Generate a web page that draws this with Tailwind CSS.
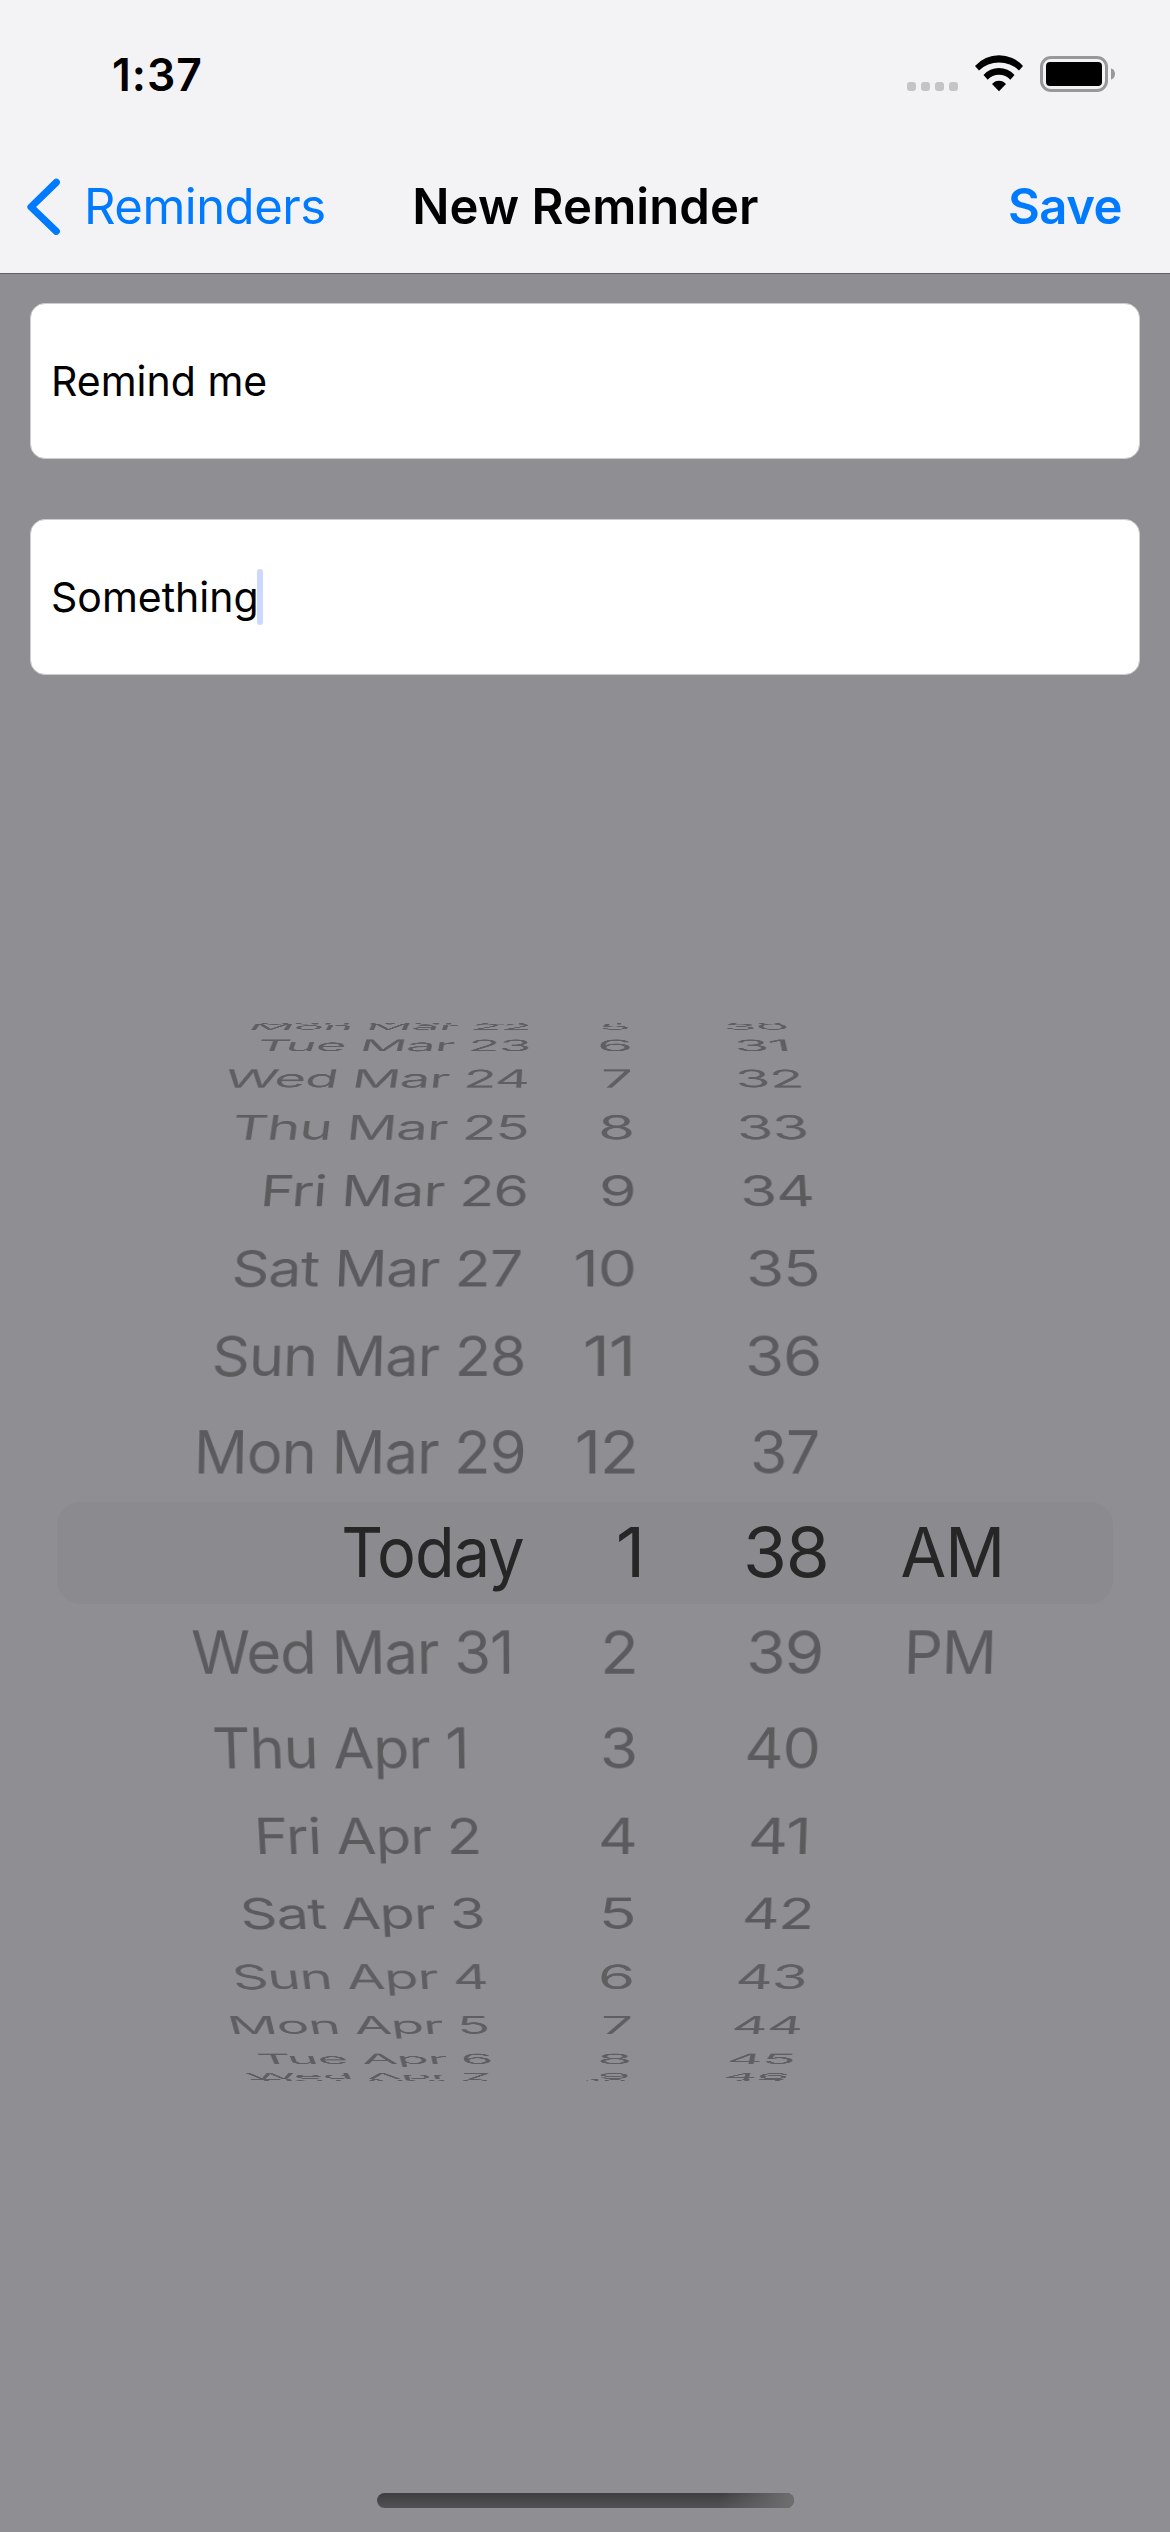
<!DOCTYPE html>
<html lang="en">
<head>
<meta charset="utf-8">
<title>New Reminder</title>
<script src="https://cdn.jsdelivr.net/npm/@tailwindcss/browser@4"></script>
</head>
<body class="w-[1170px] h-[2532px] overflow-hidden bg-[#8e8e93] flex flex-col font-['Inter','Roboto',sans-serif] text-black">
  <header class="h-[274px] shrink-0 bg-[#f3f3f6] border-b border-[#606064] flex flex-col">
    <div class="h-[147px] pt-[55px] pl-[112px] pr-[55px] flex justify-between items-start">
      <div class="text-[44.5px] leading-[40px] font-semibold tracking-[1px] whitespace-nowrap">1:37</div>
      <div class="flex items-start">
        <div class="flex gap-[5px] mt-[27px]">
          <i class="size-[9px] rounded-[3px] bg-[#c4c4c6]"></i>
          <i class="size-[9px] rounded-[3px] bg-[#c4c4c6]"></i>
          <i class="size-[9px] rounded-[3px] bg-[#c4c4c6]"></i>
          <i class="size-[9px] rounded-[3px] bg-[#c4c4c6]"></i>
        </div>
        <svg class="ml-[17px] w-[48px] h-[37px]" viewBox="0 0 48 37">
          <path d="M0 11A32 32 0 0 1 48 11L44 15.5A29 29 0 0 0 4 15.5Z"/>
          <path d="M8.5 20A20.7 20.7 0 0 1 39.5 20L35.3 24.7A15.3 15.3 0 0 0 12.7 24.7Z"/>
          <path d="M17 29A9 9 0 0 1 31 29L24 36.3Z"/>
        </svg>
        <svg class="ml-[17px] w-[75px] h-[38px]" viewBox="0 0 75 38">
          <rect x="1.5" y="2.5" width="65" height="33" rx="9.5" fill="none" stroke="#98989a" stroke-width="3"/>
          <rect x="6" y="7" width="56" height="24" rx="4"/>
          <path d="M71 13.2Q75 15 75 19T71 24.8Z" fill="#98989a"/>
        </svg>
      </div>
    </div>
    <nav class="h-[126px] grid grid-cols-[1fr_auto_1fr] pl-[27px] pr-[26px] text-[49px] leading-[60px] whitespace-nowrap">
      <a class="flex items-start text-[#007aff]">
        <svg class="w-[34px] h-[58px] mt-[31px]" viewBox="0 0 34 58" fill="none" stroke="#007aff" stroke-width="7.2" stroke-linecap="round" stroke-linejoin="round"><path d="M29.3 4.3L4 29L29.3 53.3"/></svg>
        <span class="ml-[23px] mt-[30px] tracking-[-0.5px]">Reminders</span>
      </a>
      <h1 class="mt-[30px] font-semibold tracking-[0.1px]">New Reminder</h1>
      <a class="mt-[30px] mr-[22px] text-right font-semibold text-[#007aff] tracking-[-0.5px]">Save</a>
    </nav>
  </header>

  <section class="pt-[29px] px-[30px] flex flex-col gap-[60px] text-[41px] leading-[50px] whitespace-nowrap">
    <div class="h-[156px] rounded-[15px] bg-white border border-[#cdcdcf] flex items-center pl-[20px]"><span>Remind me</span></div>
    <div class="h-[156px] rounded-[15px] bg-white border border-[#cdcdcf] flex items-center pl-[20px]"><span>Something</span><i class="-ml-[2px] w-[6px] h-[56px] rounded-[3px] bg-[#ced7fd]"></i></div>
  </section>

  <section class="mt-[348px] h-[1058px] relative overflow-hidden">
    <div class="absolute left-[57px] top-[479px] w-[1056px] h-[102px] rounded-[24px] bg-[#8a8a8f]"></div>
    <div id="wheel" class="relative flex flex-col"></div>
  </section>

  <div class="mt-[412px] ml-[377px] w-[417px] h-[15px] rounded-full bg-linear-to-b from-[#3e3e40] to-[#525254] overflow-hidden">
    <div class="ml-auto w-[75px] h-full bg-linear-to-r from-[#6c6c6e]/0 to-[#6f6f71]"></div>
  </div>

<script>
// Picker rows: cap top, baseline, side lean, then [text, left, right] per column.
const rows = [
  [1018.5, 1024.5, .013, ["Sun Mar 21", 262, 525], ["4", 601, 626], ["29", 727, 783]],
  [1024, 1030, .013, ["Mon Mar 22", 251, 529], ["5", 602, 628], ["30", 726, 787]],
  [1040, 1051.7, .014, ["Tue Mar 23", 261, 529], ["6", 600, 630], ["31", 737, 787]],
  [1070, 1088, .013, ["Wed Mar 24", 228.5, 527.5], ["7", 603, 631], ["32", 738, 800.5]],
  [1115.3, 1140, .011, ["Thu Mar 25", 236, 526.5], ["8", 601, 632], ["33", 739.5, 806]],
  [1175.7, 1206.7, .0085, ["Fri Mar 26", 264, 526], ["9", 602, 633.5], ["34", 743, 812]],
  [1249.7, 1286, .006, ["Sat Mar 27", 235, 521], ["10", 575.5, 634], ["35", 749, 817]],
  [1335.7, 1375.7, .004, ["Sun Mar 28", 215, 523.5], ["11", 585, 631], ["36", 748, 819]],
  [1430.3, 1473.3, .002, ["Mon Mar 29", 198.5, 523.5], ["12", 577, 635], ["37", 753, 818.5]],
  [1526.7, 1576.7, 0, ["Today", 344, 523], ["1", 619, 639], ["38", 747, 826], ["AM", 901.5, 1000]],
  [1630.7, 1673.7, -.003, ["Wed Mar 31", 192, 510], ["2", 604.5, 635], ["39", 749.5, 821], ["PM", 909, 991.7]],
  [1728, 1768.7, -.004, ["Thu Apr 1", 213.5, 465], ["3", 603, 635], ["40", 747.5, 818]],
  [1818.3, 1854.3, -.006, ["Fri Apr 2", 258, 478.5], ["4", 601, 635], ["41", 751, 807]],
  [1897.5, 1928.5, -.0085, ["Sat Apr 3", 243, 482.5], ["5", 603, 633], ["42", 745, 811]],
  [1964.3, 1989, -.011, ["Sun Apr 4", 235, 486], ["6", 601, 632], ["43", 738.5, 805]],
  [2016, 2033.7, -.013, ["Mon Apr 5", 230, 487], ["7", 603, 631], ["44", 734.5, 801]],
  [2053.3, 2063.7, -.014, ["Tue Apr 6", 257, 490.5], ["8", 600, 629.5], ["45", 730, 793]],
  [2073.7, 2079.5, -.013, ["Wed Apr 7", 245, 489.5], ["9", 600, 628], ["46", 726, 787]],
  [2079.5, 2084, -.013, ["Thu Apr 8", 250, 489], ["10", 586, 626], ["47", 726, 783]]
];
const AXIS = 600, WHEEL_TOP = 1023, WHEEL_BOTTOM = 2081, LINE = 72;
const columnX = [0, 540, 700, 880];
const wheel = document.getElementById("wheel");
const ctx = document.createElement("canvas").getContext("2d");
const mid = r => (r[0] + r[1]) / 2;

// Matrix taking the unit square to the quad p0 p1 p2 p3 (clockwise from top left).
function squareToQuad([x0, y0], [x1, y1], [x2, y2], [x3, y3]) {
  const dx1 = x1 - x2, dx2 = x3 - x2, sx = x0 - x1 + x2 - x3;
  const dy1 = y1 - y2, dy2 = y3 - y2, sy = y0 - y1 + y2 - y3;
  const d = dx1 * dy2 - dx2 * dy1;
  const g = (sx * dy2 - dx2 * sy) / d, h = (dx1 * sy - sx * dy1) / d;
  return [x1 - x0 + g * x1, y1 - y0 + g * y1, 0, g,
          x3 - x0 + h * x3, y3 - y0 + h * y3, 0, h,
          0, 0, 1, 0, x0, y0, 0, 1];
}

function place([text, left, right], r, px, ox, oy) {
  ctx.font = `${px}px Inter`;
  ctx.letterSpacing = "-1px";
  const m = ctx.measureText(text), capH = px * .727;
  const A = Math.round(m.fontBoundingBoxAscent), D = Math.round(m.fontBoundingBoxDescent);
  const base = (LINE - A - D) / 2 + A;
  const ink = -m.actualBoundingBoxLeft, inkW = m.actualBoundingBoxRight - ink;
  const k = r[2], at = (x, v) => AXIS + (x - AXIS) * (1 + k * v);
  const anchor = /^[TW]/.test(text) ? -.5 : /^[MF]/.test(text) ? (k > 0 ? .5 : -.5) : 0;
  const L = AXIS + (left - AXIS) / (1 + k * anchor);
  const t = r[0] - oy, b = r[1] - oy;
  const [a, c] = [at(L, -.5) - ox, at(right, -.5) - ox];
  const [e, f] = [at(L, .5) - ox, at(right, .5) - ox];
  const q = squareToQuad([a, t], [c, t], [f, b], [e, b]);
  return `matrix3d(${q.map(n => n.toFixed(8)).join(",")}) scale(${1 / inkW},${1 / capH}) translate(${-ink}px,${capH - base}px)`;
}

rows.forEach((r, i) => {
  const top = i ? (mid(rows[i - 1]) + mid(r)) / 2 : WHEEL_TOP;
  const bottom = i < rows.length - 1 ? (mid(r) + mid(rows[i + 1])) / 2 : WHEEL_BOTTOM;
  const row = document.createElement("div");
  row.className = "shrink-0 grid grid-cols-[540px_160px_180px_290px] items-start tracking-[-1px] " + (r[2] === 0 ? "text-[#262626] text-[69px]" : i > 4 && i < 14 ? "text-[#5b5b5e] text-[60px]" : "text-[#5f5f62] text-[60px]");
  row.style.height = bottom - top + "px";
  r.slice(3).forEach((cell, j) => {
    const s = document.createElement("span");
    s.className = "justify-self-start origin-top-left leading-[72px] h-[72px] whitespace-nowrap";
    s.textContent = cell[0];
    s.style.transform = place(cell, r, r[2] === 0 ? 69 : 60, columnX[j], top);
    row.append(s);
  });
  wheel.append(row);
});
</script>
</body>
</html>
